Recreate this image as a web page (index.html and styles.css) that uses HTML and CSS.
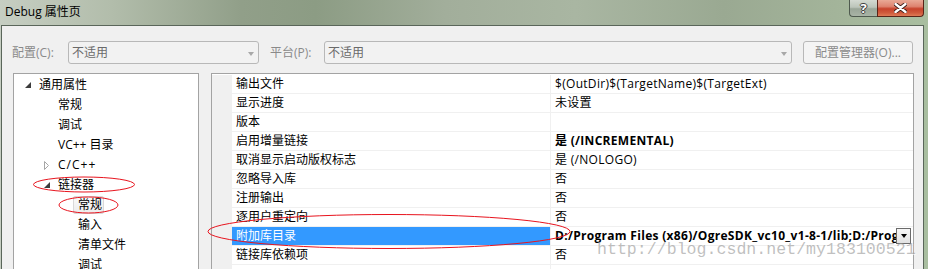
FILE: index.html
```html
<!DOCTYPE html>
<html lang="zh-CN">
<head>
<meta charset="utf-8">
<title>Debug 属性页</title>
<link rel="stylesheet" href="styles.css">
</head>
<body>
<div class="window">
  <div class="titlebar">
    <span class="title">Debug 属性页</span>
    <div class="caption">
      <div class="cbtn help"><span class="q">?</span></div>
      <div class="cbtn close">
        <svg width="13" height="10" viewBox="0 0 13 10">
          <path d="M1.5 1 L11.5 9 M11.5 1 L1.5 9" stroke="#3a1a14" stroke-width="4.2" stroke-linecap="round"/>
          <path d="M1.5 1 L11.5 9 M11.5 1 L1.5 9" stroke="#ffffff" stroke-width="2.4" stroke-linecap="round"/>
        </svg>
      </div>
    </div>
  </div>
  <div class="client">
    <div class="toolbar">
      <span class="lbl lbl1">配置(C):</span>
      <div class="combo combo1"><span class="ctext">不适用</span><span class="carrow"></span></div>
      <span class="lbl lbl2">平台(P):</span>
      <div class="combo combo2"><span class="ctext">不适用</span><span class="carrow"></span></div>
      <div class="btn">配置管理器(O)...</div>
    </div>
    <div class="panels">
      <div class="tree">
        <div class="trow l0"><span class="exp"><svg width="6" height="6" viewBox="0 0 6 6"><path d="M6 0 L6 6 L0 6 Z" fill="#3c3c3c"/></svg></span><span class="txt">通用属性</span></div>
        <div class="trow l1"><span class="exp"></span><span class="txt">常规</span></div>
        <div class="trow l1"><span class="exp"></span><span class="txt">调试</span></div>
        <div class="trow l1"><span class="exp"></span><span class="txt">VC++ 目录</span></div>
        <div class="trow l1"><span class="exp"><svg width="6" height="9" viewBox="0 0 6 9"><path d="M0.5 0.5 L4.5 4.5 L0.5 8.5 Z" fill="#ffffff" stroke="#a6a6a6" stroke-width="1"/></svg></span><span class="txt lat">C/C++</span></div>
        <div class="trow l1"><span class="exp"><svg width="6" height="6" viewBox="0 0 6 6"><path d="M6 0 L6 6 L0 6 Z" fill="#3c3c3c"/></svg></span><span class="txt">链接器</span></div>
        <div class="trow l2"><span class="exp"></span><span class="txt sel">常规</span></div>
        <div class="trow l2"><span class="exp"></span><span class="txt">输入</span></div>
        <div class="trow l2"><span class="exp"></span><span class="txt">清单文件</span></div>
        <div class="trow l2"><span class="exp"></span><span class="txt">调试</span></div>
      </div>
      <div class="grid">
        <div class="grow"><span class="cat"></span><span class="name">输出文件</span><span class="val"><span class="vtext">$(OutDir)$(TargetName)$(TargetExt)</span></span></div>
        <div class="grow"><span class="cat"></span><span class="name">显示进度</span><span class="val"><span class="vtext">未设置</span></span></div>
        <div class="grow"><span class="cat"></span><span class="name">版本</span><span class="val"><span class="vtext"></span></span></div>
        <div class="grow"><span class="cat"></span><span class="name">启用增量链接</span><span class="val"><span class="vtext bold">是 (/INCREMENTAL)</span></span></div>
        <div class="grow"><span class="cat"></span><span class="name">取消显示启动版权标志</span><span class="val"><span class="vtext">是 (/NOLOGO)</span></span></div>
        <div class="grow"><span class="cat"></span><span class="name">忽略导入库</span><span class="val"><span class="vtext">否</span></span></div>
        <div class="grow"><span class="cat"></span><span class="name">注册输出</span><span class="val"><span class="vtext">否</span></span></div>
        <div class="grow"><span class="cat"></span><span class="name">逐用户重定向</span><span class="val"><span class="vtext">否</span></span></div>
        <div class="grow selected"><span class="cat"></span><span class="name">附加库目录</span><span class="val"><span class="vtext bold">D:/Program Files (x86)/OgreSDK_vc10_v1-8-1/lib;D:/Program Files (x86)/OgreSDK_vc10_v1-8-1/boost/lib;%(AdditionalLibraryDirectories)</span><span class="ddbtn"><span class="ddarrow"></span></span></span></div>
        <div class="grow"><span class="cat"></span><span class="name">链接库依赖项</span><span class="val"><span class="vtext">否</span></span></div>
        <div class="grow"><span class="cat"></span><span class="name"></span><span class="val"><span class="vtext"></span></span></div>
      </div>
    </div>
  </div>
  <div class="watermark">http://blog.csdn.net/my183100521</div>
  <svg class="annot" width="928" height="269" viewBox="0 0 928 269">
    <ellipse cx="84" cy="184.5" rx="50.5" ry="7.5" fill="none" stroke="#e8141e" stroke-width="1"/>
    <ellipse cx="88.5" cy="205" rx="29.5" ry="8" fill="none" stroke="#e8141e" stroke-width="1"/>
    <ellipse cx="389" cy="231.5" rx="181" ry="17" fill="none" stroke="#e8141e" stroke-width="1"/>
  </svg>
</div>
</body>
</html>
```
FILE: styles.css
```css
* { box-sizing: border-box; }
html, body { margin: 0; padding: 0; }
body {
  width: 928px;
  height: 269px;
  overflow: hidden;
  font-family: "Open Sans", "Noto Sans CJK SC", sans-serif;
  font-size: 12px;
  color: #000;
}
.window {
  position: relative;
  width: 928px;
  height: 269px;
  overflow: hidden;
  background: linear-gradient(90deg, #c6cec2 0%, #b2bdab 12%, #919f89 26%, #8c9c84 34%, #a2ae9b 48%, #a9b6a2 62%, #9aa992 78%, #a3b49a 90%, #a9bea0 100%);
}
.titlebar {
  height: 25px;
  display: flex;
  align-items: flex-start;
}
.title {
  margin-left: 5px;
  line-height: 24px;
  color: #000;
}
.caption {
  margin-left: auto;
  margin-right: 4px;
  display: flex;
}
.cbtn {
  height: 17px;
  display: flex;
  align-items: center;
  justify-content: center;
  border: 1px solid #4f5a4f;
  border-top: none;
}
.help {
  width: 28px;
  border-right: none;
  border-radius: 0 0 0 4px;
  background: linear-gradient(180deg, #d4dad2 0%, #bcc5ba 45%, #9aa698 55%, #a9b4a6 100%);
}
.q {
  font-weight: 700;
  font-size: 13px;
  line-height: 14px;
  color: #fff;
  text-shadow: 0 0 1px #333, 1px 0 0 #444, -1px 0 0 #444, 0 1px 0 #444, 0 -1px 0 #444;
}
.close {
  width: 47px;
  border-radius: 0 0 4px 0;
  border-color: #5a2418;
  background: linear-gradient(180deg, #e9a996 0%, #de8470 40%, #c7432c 55%, #cf5a3c 80%, #e07a55 100%);
}
.client {
  margin-left: 1px;
  width: 923px;
  height: 244px;
  border: 1px solid #5a665a;
  border-bottom: none;
  background: #f0f0f0;
}
.toolbar {
  display: flex;
  align-items: center;
  height: 23px;
  margin-top: 15px;
  padding-left: 10px;
}
.lbl {
  color: #8a8a8a;
  line-height: 16px;
  white-space: nowrap;
}
.lbl1 { width: 56px; }
.lbl2 { width: 54px; margin-left: 11px; }
.combo {
  height: 23px;
  border: 1px solid #b8b8b8;
  border-radius: 3px;
  background: #f2f2f2;
  display: flex;
  align-items: center;
  padding: 0 4px 0 3px;
}
.combo1 { width: 191px; }
.combo2 { width: 468px; }
.ctext {
  flex: 1;
  color: #6a6a6a;
  line-height: 16px;
}
.carrow {
  width: 0;
  height: 0;
  border-left: 3.5px solid transparent;
  border-right: 3.5px solid transparent;
  border-top: 4px solid #a8a8a8;
  margin-top: 2px;
}
.btn {
  width: 110px;
  height: 23px;
  margin-left: 11px;
  border: 1px solid #b8b8b8;
  border-radius: 3px;
  background: #f4f4f4;
  color: #8a8a8a;
  display: flex;
  align-items: center;
  justify-content: center;
  line-height: 16px;
}
.panels {
  display: flex;
  margin-top: 9px;
  padding-left: 11px;
}
.tree {
  width: 186px;
  height: 200px;
  border: 1px solid #a3a3a3;
  border-bottom: none;
  background: #fff;
  padding-top: 1px;
}
.trow {
  height: 20px;
  display: flex;
  align-items: center;
}
.l0 { padding-left: 0; }
.l1 { padding-left: 19px; }
.l2 { padding-left: 39px; }
.exp {
  width: 20px;
  height: 20px;
  display: flex;
  align-items: center;
  justify-content: flex-end;
  padding-right: 3px;
}
.exp svg { display: block; }
.txt {
  padding: 0 2px 0 5px;
  line-height: 18px;
  white-space: nowrap;
}
.txt.lat { letter-spacing: 1px; }
.txt.sel {
  height: 18px;
  line-height: 16px;
  padding: 0 1px 0 4px;
  border: 1px solid #d9d9d9;
  border-radius: 2px;
  background: linear-gradient(180deg, #fafafa 0%, #ececec 100%);
}
.grid {
  width: 703px;
  height: 200px;
  margin-left: 12px;
  border: 1px solid #a3a3a3;
  border-bottom: none;
  background: #fff;
  padding-top: 1px;
}
.grow {
  display: flex;
  height: 19px;
  border-bottom: 1px solid #f0f0f0;
}
.cat {
  width: 20px;
  flex: none;
  background: #f0f0f0;
  margin-bottom: -1px;
}
.name {
  width: 319px;
  flex: none;
  padding-left: 4px;
  line-height: 18px;
  border-right: 1px solid #f0f0f0;
  white-space: nowrap;
  overflow: hidden;
}
.val {
  flex: 1;
  min-width: 0;
  display: flex;
  align-items: center;
  padding-left: 4px;
  padding-right: 2px;
}
.vtext {
  flex: 1;
  min-width: 0;
  line-height: 18px;
  letter-spacing: 0.3px;
  white-space: nowrap;
  overflow: hidden;
}
.bold { font-weight: 700; }
.selected .name {
  background: #3399ff;
  color: #fff;
}
.ddbtn {
  flex: none;
  width: 15px;
  height: 16px;
  border: 1px solid #6b6b6b;
  background: linear-gradient(180deg, #f6f6f6 0%, #e2e2e2 100%);
  display: flex;
  align-items: center;
  justify-content: center;
}
.ddarrow {
  width: 0;
  height: 0;
  border-left: 3.5px solid transparent;
  border-right: 3.5px solid transparent;
  border-top: 4px solid #000;
}
.watermark {
  position: absolute;
  left: 597px;
  top: 240px;
  font-family: "Liberation Mono", monospace;
  font-size: 16.6px;
  line-height: 20px;
  color: rgba(150, 150, 150, 0.6);
  text-shadow: 1px 1px 0 rgba(255, 255, 255, 0.6);
  white-space: nowrap;
  pointer-events: none;
}
.annot {
  position: absolute;
  left: 0;
  top: 0;
  pointer-events: none;
}
```
